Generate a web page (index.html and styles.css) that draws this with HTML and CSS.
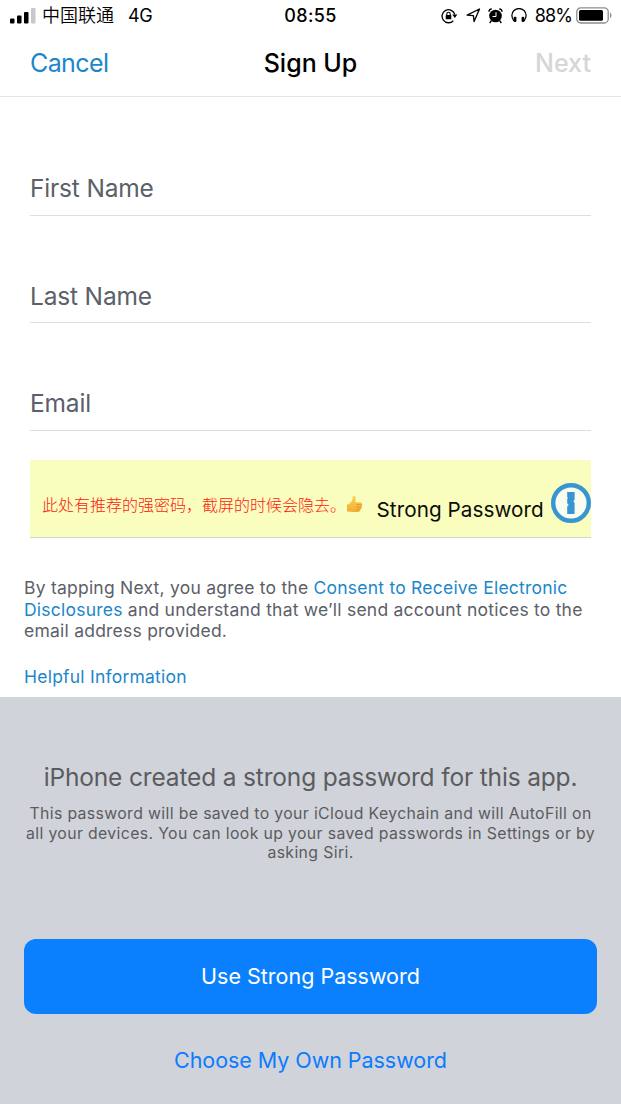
FILE: index.html
```html
<!DOCTYPE html>
<html lang="en">
<head>
<meta charset="utf-8">
<title>Sign Up</title>
<link rel="stylesheet" href="styles.css">
</head>
<body>
<div class="screen">
  <div class="status">
    <div class="status-left">
      <svg class="signal" width="26" height="16" viewBox="0 0 26 16"><rect x="0" y="10.400" width="4.5" height="5" rx="1"/><rect x="7" y="7.500" width="4.5" height="7.900" rx="1"/><rect x="14" y="4" width="4.5" height="11.400" rx="1"/><rect x="21" y="0" width="4.5" height="15.400" rx="1" fill="#c8c8c8"/></svg>
      <span class="carrier">中国联通</span>
      <span class="network">4G</span>
    </div>
    <div class="clock">08:55</div>
    <div class="status-right">
      <svg class="icon-lock" width="17" height="16" viewBox="0 0 17 16"><path d="M12.300 12.700A6.500 6.500 0 1 1 13.800 6.400" fill="none" stroke="#000" stroke-width="1.3"/><path d="M11.200 6.400h5.200l-2.600 3.600z"/><rect x="4.700" y="7.100" width="5.600" height="4.200" rx=".6"/><path d="M5.800 7.300V6a1.700 1.700 0 0 1 3.400 0v1.300" fill="none" stroke="#000" stroke-width="1.1"/></svg>
      <svg class="icon-arrow" width="15" height="15" viewBox="0 0 15 15"><path d="M1.100 7.100L13.500 1L8.100 13.600L7.400 7.600z" fill="none" stroke="#000" stroke-width="1.350" stroke-linejoin="round"/></svg>
      <svg class="icon-alarm" width="15" height="16" viewBox="0 0 15 16"><circle cx="7.500" cy="8" r="6.300"/><path d="M.9 3.800Q1 1.200 3.800 .9M11.200 .9Q14 1.200 14.100 3.800M3.300 12.700L1.700 15M11.700 12.700l1.600 2.300" fill="none" stroke="#000" stroke-width="1.400"/><path d="M8 4.200v4.300H4.600" fill="none" stroke="#fff" stroke-width="1"/></svg>
      <svg class="icon-phones" width="16" height="15" viewBox="0 0 16 15"><path d="M2.900 13Q.8 10 .9 7.300A6.700 6.400 0 0 1 15.100 7.300Q15.200 10 13.100 13" fill="none" stroke="#000" stroke-width="1.250"/><rect x="2.700" y="8.700" width="2.700" height="5.400" rx="1"/><rect x="10.600" y="8.700" width="2.700" height="5.400" rx="1"/></svg>
      <span class="percent">88%</span>
      <svg class="battery" width="37" height="17" viewBox="0 0 37 17"><rect x=".8" y=".8" width="31.400" height="15.200" rx="4" fill="none" stroke="#8d8d8d" stroke-width="1.300"/><rect x="3" y="3" width="24" height="10.800" rx="1.600"/><path d="M34 5.200q3 3.200 0 6.400z" fill="#8d8d8d"/></svg>
    </div>
  </div>
  <div class="nav">
    <span class="cancel">Cancel</span>
    <span class="title">Sign Up</span>
    <span class="next">Next</span>
  </div>
  <div class="form">
    <div class="field"><span>First Name</span></div>
    <div class="field"><span>Last Name</span></div>
    <div class="field"><span>Email</span></div>
    <div class="password">
      <span class="hint">此处有推荐的强密码，截屏的时候会隐去。</span>
      <svg class="thumb" width="17" height="17" viewBox="0 0 17 17"><defs><linearGradient id="skin" x1="0" y1="0" x2="0" y2="1"><stop offset="0" stop-color="#ffd24f"/><stop offset="1" stop-color="#f0ad35"/></linearGradient></defs><path d="M1 8.700Q3.500 8.300 5 6.300Q6.700 4.200 6.700 1.700C6.700-.4 9-.4 9.500 1.500C9.900 3.300 9.500 5 9.300 6.200H14.500q1.500.2 1.300 1.500q.8 1 .1 2.200q.4 1.300-.6 2.300q0 1.600-1.200 1.900q-.3 1.900-1.900 1.900H7.500Q4.500 16 1 15.600z" fill="url(#skin)"/><path d="M10.300 8.600h5.200M10.300 11.100h5.200M10.300 13.600h4" stroke="#cb8626" stroke-width=".6" fill="none"/></svg>
      <span class="strong">Strong Password</span>
      <svg class="keyhole" width="40" height="40" viewBox="0 0 40 40"><circle cx="20" cy="20" r="17.800" fill="#f9fdf0" stroke="#3895d2" stroke-width="4.400"/><path d="M16.200 9h7.400v7.700l-1.200 1.500 1.200 1.900V31h-7.400v-7.400l1.500-1.700-1.500-1.700V16l.8-1-.8-1z" fill="#3895d2"/></svg>
    </div>
  </div>
  <div class="legal">
    <div>By tapping Next, you agree to the <a>Consent to Receive Electronic</a></div>
    <div><a>Disclosures</a> and understand that we’ll send account notices to the</div>
    <div>email address provided.</div>
    <div class="helpful"><a>Helpful Information</a></div>
  </div>
  <div class="sheet">
    <div class="heading">iPhone created a strong password for this app.</div>
    <div class="note">
      <div>This password will be saved to your iCloud Keychain and will AutoFill on</div>
      <div>all your devices. You can look up your saved passwords in Settings or by</div>
      <div>asking Siri.</div>
    </div>
    <div class="primary">Use Strong Password</div>
    <div class="secondary">Choose My Own Password</div>
  </div>
</div>
</body>
</html>
```
FILE: styles.css
```css
* { box-sizing: border-box; }
body { margin: 0; background: #fff; }
.screen {
  width: 621px; height: 1104px; overflow: hidden;
  display: flex; flex-direction: column;
  font-family: Inter, "Noto Sans CJK SC", sans-serif;
  font-weight: 400;
  white-space: nowrap; color: #000;
}
svg { display: block; flex: none; }
.status {
  height: 31px; flex: none; padding: 0 8px 0 10px;
  display: grid; grid-template-columns: 1fr auto 1fr; align-items: center;
  font-size: 18px; line-height: 31px;
}
.status-left, .status-right { display: flex; align-items: center; }
.signal { margin-right: 6px; }
.carrier { font-family: "Noto Sans CJK SC", sans-serif; font-weight: 350; line-height: 29px; margin: -2px 14px 0 0; }
.network { letter-spacing: -0.5px; }
.clock { font-weight: 500; letter-spacing: 0.4px; margin-right: 2px; }
.status-right { justify-content: flex-end; }
.icon-lock { margin-right: 8px; }
.icon-arrow { margin-right: 7px; }
.icon-alarm { margin-right: 8px; }
.icon-phones { margin-right: 8px; }
.percent { letter-spacing: -0.9px; margin-right: 4px; }
.nav {
  height: 66px; flex: none; padding: 0 30px; border-bottom: 1px solid #e4e5e6;
  display: grid; grid-template-columns: 1fr auto 1fr;
  font-size: 25px; line-height: 65px;
}
.cancel { color: #1b87c9; letter-spacing: -0.6px; }
.title { font-weight: 550; }
.next { color: #d5d6d8; font-weight: 550; text-align: right; }
.form { flex: none; padding: 0 30px; }
.field {
  height: 107.4px; padding-top: 68px; border-bottom: 1px solid #dcdfe2;
  font-size: 24.5px; line-height: 24px; letter-spacing: -0.17px; color: #5b6069;
}
.field:first-child { height: 119px; padding-top: 79px; }
.password {
  height: 78px; margin-top: 29.2px; padding-left: 12px;
  background: #f9fdbe; border-bottom: 1px solid #d6d8c6;
  display: flex; align-items: center;
}
.hint { font-family: "Noto Sans CJK SC", sans-serif; font-size: 16px; font-weight: 300; color: #ff2010; line-height: 20px; margin-top: 11px; width: 304px; }
.thumb { margin-top: 12px; }
.strong { font-size: 20.7px; letter-spacing: 0.06px; line-height: 24px; margin: 23px 0 0 13.5px; width: 174.5px; color: #0c0d08; }
.keyhole { margin-top: 9px; }
.legal { flex: none; height: 159.4px; padding: 39.5px 24px 0; font-size: 17.5px; letter-spacing: 0.23px; line-height: 21.5px; color: #5b6069; }
.legal a { color: #1b87c9; }
.helpful { margin-top: 24px; }
.sheet {
  flex: 1; background: #d0d3da; padding: 64.5px 24px 0; text-align: center; color: #5b5c5e;
}
.heading { font-size: 24.5px; line-height: 30px; letter-spacing: -0.16px; }
.note { font-size: 15.8px; line-height: 19.5px; letter-spacing: 0.37px; margin: 12.5px -10px 0; }
.primary {
  height: 75px; margin-top: 76px; border-radius: 12px; background: #0b80ff;
  color: #fff; font-size: 21.5px; line-height: 75px;
}
.secondary { margin-top: 31px; color: #0b7bff; font-size: 21.5px; line-height: 30px; letter-spacing: -0.05px; }
```
